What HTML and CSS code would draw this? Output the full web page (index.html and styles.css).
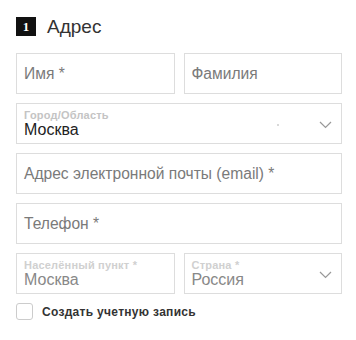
FILE: index.html
```html
<!DOCTYPE html>
<html lang="ru">
<head>
    <meta charset="UTF-8">
    <meta name="viewport" content="width=device-width, initial-scale=1.0">
    <title>Адрес</title>
    <link rel="stylesheet" href="styles.css">
</head>
<body>
    <section class="address">
        <h2 class="stepTitle"><span class="stepNum">1</span>Адрес</h2>

        <!-- Name row -->
        <div class="row">
            <div class="field"><span class="placeholder">Имя *</span></div>
            <div class="field"><span class="placeholder">Фамилия</span></div>
        </div>

        <div class="field select">
            <div class="value">
                <span class="label">Город/Область</span>
                <span class="text">Москва</span>
            </div>
            <span class="dot"></span>
            <svg class="chevron" width="13" height="8" viewBox="0 0 13 8"><path d="M1 1l5.5 5.5L12 1" fill="none" stroke="#999" stroke-width="1.2"/></svg>
        </div>

        <div class="field"><span class="placeholder">Адрес электронной почты (email) *</span></div>
        <div class="field"><span class="placeholder">Телефон *</span></div>

        <div class="row">
            <div class="field muted">
                <div class="value">
                    <span class="label">Населённый пункт *</span>
                    <span class="text">Москва</span>
                </div>
            </div>
            <div class="field select muted">
                <div class="value">
                    <span class="label">Страна *</span>
                    <span class="text">Россия</span>
                </div>
                <svg class="chevron" width="13" height="8" viewBox="0 0 13 8"><path d="M1 1l5.5 5.5L12 1" fill="none" stroke="#999" stroke-width="1.2"/></svg>
            </div>
        </div>

        <label class="check">
            <span class="box"></span>
            Создать учетную запись
        </label>
    </section>
</body>
</html>
```

FILE: styles.css
```css
* {
    margin: 0;
    box-sizing: border-box;
    font-family: "Liberation Sans", Arial, Helvetica, sans-serif;
}

body {
    background: #fff;
}

.address {
    padding: 17px 14px 0 16px;
}

.stepTitle {
    display: flex;
    align-items: center;
    height: 19px;
    font-size: 19px;
    font-weight: normal;
    color: #333;
    margin-bottom: 17px;
}

.stepNum {
    display: inline-flex;
    align-items: center;
    justify-content: center;
    width: 20px;
    height: 19px;
    margin-right: 11px;
    background: #111;
    color: #fff;
    font-family: "Liberation Serif", serif;
    font-weight: bold;
    font-size: 13px;
}

.row {
    display: grid;
    grid-template-columns: 1fr 1fr;
    gap: 9px;
}

.field {
    display: flex;
    align-items: center;
    height: 41px;
    margin-bottom: 9px;
    padding: 0 9px 0 7px;
    border: 1px solid #ddd;
}

.placeholder {
    font-size: 15.6px;
    color: #7a7a7a;
}

.value {
    display: flex;
    flex-direction: column;
    flex: 1;
    margin-top: -1px;
}

.label {
    font-size: 11px;
    font-weight: bold;
    letter-spacing: 0.2px;
    color: #c4c4c4;
    line-height: 12px;
}

.text {
    font-size: 16px;
    color: #222;
    line-height: 17px;
}

.muted .text {
    color: #888;
}

.muted .label {
    color: #d0d0d0;
}

.dot {
    width: 2px;
    height: 2px;
    border-radius: 50%;
    background: #ccc;
    margin: 3px 40px 0 0;
}

.chevron {
    margin-top: 2px;
}

.check {
    display: flex;
    align-items: center;
    gap: 9px;
    font-size: 12px;
    font-weight: bold;
    letter-spacing: 0.3px;
    color: #333;
}

.box {
    width: 17px;
    height: 17px;
    border: 1px solid #ccc;
    border-radius: 3px;
}
```
